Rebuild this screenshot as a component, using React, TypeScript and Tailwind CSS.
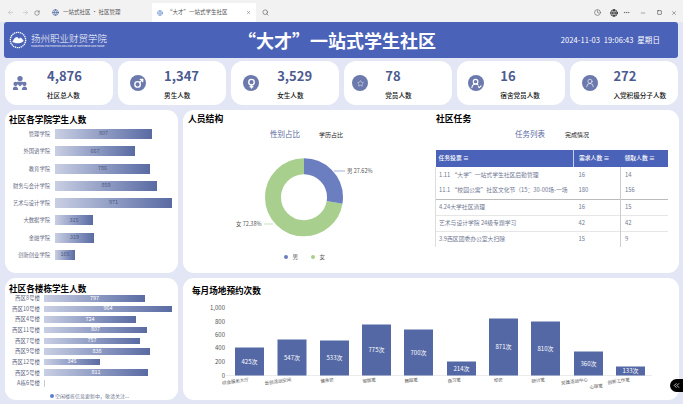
import { ArrowLeft, ArrowRight, ChevronsLeft, Clock, Ellipsis, Globe, Mars, Minus, RotateCw, Search, Square, UserRound, Venus, X, Star, UserRoundCheck } from 'lucide-react'

const stats = [
  { value: '4,876', label: '社区总人数', offset: 'pl-[7px] gap-[19px]' },
  { value: '1,347', label: '男生人数', offset: 'pl-[12px] gap-[18px]' },
  { value: '3,529', label: '女生人数', offset: 'pl-[12px] gap-[18px]' },
  { value: '78', label: '党员人数', offset: 'pl-[8px] gap-[17px]' },
  { value: '16', label: '宿舍党员人数', offset: 'pl-[11px] gap-[16px]' },
  { value: '272', label: '入党积极分子人数', offset: 'pl-[12px] gap-[15px]' },
]

const colleges = [
  { name: '管理学院', value: 807, width: 97 },
  { name: '外国语学院', value: 667, width: 80 },
  { name: '教育学院', value: 786, width: 95 },
  { name: '财务与会计学院', value: 859, width: 102 },
  { name: '艺术与设计学院', value: 971, width: 117 },
  { name: '大数据学院', value: 315, width: 38 },
  { name: '金融学院', value: 319, width: 39 },
  { name: '创新创业学院', value: 165, width: 20 },
]

const buildings = [
  { name: '西区8号楼', value: 797, width: 101 },
  { name: '西区10号楼', value: 964, width: 128 },
  { name: '西区4号楼', value: 724, width: 92 },
  { name: '西区11号楼', value: 807, width: 103 },
  { name: '西区7号楼', value: 757, width: 96 },
  { name: '西区9号楼', value: 838, width: 106 },
  { name: '西区12号楼', value: 345, width: 56 },
  { name: '西区5号楼', value: 811, width: 104 },
  { name: 'A栋6号楼', value: null, width: 0 },
]

const tasks = [
  ['1.11 “大学”一站式学生社区后勤管理', 16, 14],
  ['11.1 “校园公寓”社区文化节（15：30-00场-一场', 180, 156],
  ['4.24大学社区清理', 16, 15],
  ['艺术与设计学院 24级专题学习', 42, 42],
  ['3.9西区团委办公室大扫除', 15, 9],
]

const bookings = [
  { name: '综合服务大厅', value: 425, x: 52, height: 28 },
  { name: '云创活动空间', value: 547, x: 94.5, height: 36 },
  { name: '健身房', value: 533, x: 137, height: 35 },
  { name: '瑜伽室', value: 775, x: 179, height: 51 },
  { name: '舞蹈室', value: 700, x: 221, height: 46 },
  { name: '自习室', value: 214, x: 264, height: 14 },
  { name: '琴房', value: 871, x: 306, height: 57 },
  { name: '研讨室', value: 810, x: 348, height: 54 },
  { name: '党建活动中心', value: 360, x: 391, height: 24 },
  { name: '创新工作室', value: 133, x: 433, height: 9 },
]

function StatIcon({ index }: { index: number }) {
  if (index === 0) {
    return (
      <svg viewBox="0 0 18 18" className="h-[16px] w-[16px] shrink-0 fill-[#6b79ad]">
        <circle cx="9" cy="4" r="3" />
        <circle cx="4" cy="10" r="2.4" />
        <circle cx="14" cy="10" r="2.4" />
        <path d="M6 7.5h6l1 1.500-4 4-4-4zM1 17c0-3 1-4 3-4 1.500 0 2.500 1 3 4zM11 17c.5-3 1.500-4 3-4 2 0 3 1 3 4z" />
      </svg>
    )
  }
  const glyph = [
    null,
    <Mars key="m" size={11} strokeWidth={3} />,
    <Venus key="v" size={11} strokeWidth={3} />,
    <Star key="s" size={7} strokeWidth={1.500} />,
    <UserRoundCheck key="u" size={11} strokeWidth={2.500} />,
    <UserRound key="r" size={10} strokeWidth={1.500} />,
  ][index]
  return (
    <div className="flex h-[16px] w-[16px] shrink-0 items-center justify-center rounded-full bg-[#6b79ad] text-white">
      {glyph}
    </div>
  )
}

function HBar({ width, value, tall }: { width: number; value: number | null; tall: boolean }) {
  return (
    <div
      className={`${tall ? 'h-[10px] text-[#4f5a80]' : 'h-[6.500px] text-white'} flex items-center justify-center bg-linear-to-r from-[#c9cfe3] to-[#5a6ba3] text-[5.500px] leading-none`}
      style={{ width }}
    >
      {value}
    </div>
  )
}

export default function App() {
  return (
    <div className="flex h-[404px] w-[683px] flex-col overflow-hidden bg-[#e3e7f5] font-['Noto_Sans_CJK_SC','Noto_Sans',sans-serif]">
      {/* browser chrome */}
      <div className="flex h-[22px] shrink-0 items-end bg-[#f2f2f2] text-[#555]">
        <div className="flex h-[19px] w-[41px] shrink-0 items-center gap-[8px] pl-[7px]">
          <ArrowLeft size={7} className="shrink-0 text-[#bbb]" />
          <ArrowRight size={7} className="shrink-0 text-[#bbb]" />
          <RotateCw size={6} className="-ml-[3px] shrink-0" />
        </div>
        <div className="ml-[11px] flex h-[19px] w-[100px] shrink-0 items-center gap-[4px] text-[5.500px] whitespace-nowrap">
          <Globe size={7} className="shrink-0 text-[#3c5a9a]" />
          一站式社区 · 社区管理
        </div>
        <div className="flex h-[19px] w-[104px] shrink-0 items-center gap-[4px] bg-white pl-[5px] text-[5.500px] whitespace-nowrap">
          <Globe size={6} className="shrink-0 text-[#5a7fd0]" />
          “大才”一站式学生社区
          <X size={5} className="ml-auto mr-[5px] shrink-0" />
        </div>
        <div className="flex h-[19px] items-center pl-[6px]">
          <Search size={7} />
        </div>
        <div className="ml-auto flex h-[19px] items-center pr-[6px]">
          <Clock size={7} />
          <Globe size={8} className="ml-[9px] text-black" />
          <Ellipsis size={7} className="ml-[5px]" />
          <Minus size={6} className="ml-[10px]" />
          <Square size={5} className="ml-[11px] text-black" />
          <X size={6} className="ml-[9px]" />
        </div>
      </div>

      {/* title bar */}
      <div className="mx-[4px] mr-[5px] flex h-[36px] shrink-0 items-center rounded-[3px] bg-[#4a62b8] text-white">
        <div className="flex w-[234px] shrink-0 items-center gap-[3px] pl-[4px]">
          <svg viewBox="0 0 20 20" className="h-[18px] w-[20px] shrink-0 fill-none stroke-white">
            <circle cx="10" cy="10" r="8.500" strokeWidth="1.500" strokeDasharray="1.500 0.700" />
            <path d="M4 12c3-6 5-6 7-3 1-2 3-2 5 2-3 3-9 3-12 1z" fill="white" strokeWidth="0.500" />
          </svg>
          <div className="flex flex-col">
            <span className="text-[9.500px] leading-[13px] font-light">扬州职业财贸学院</span>
            <span className="text-[2.500px] leading-[3px] whitespace-nowrap">YANGZHOU POLYTECHNIC COLLEGE OF COMMERCE AND TRADE</span>
          </div>
        </div>
        <div className="flex-1 text-[18px] font-bold whitespace-nowrap">“大才”一站式学生社区</div>
        <div className="pr-[18px] text-[7.500px] tracking-[0.100px] whitespace-nowrap">2024-11-03&nbsp; 19:06:43&nbsp; 星期日</div>
      </div>

      {/* stat cards */}
      <div className="mt-[3px] grid h-[44px] shrink-0 grid-cols-6 gap-[5.500px] pr-[5px] pl-[5px]">
        {stats.map((stat, i) => (
          <div key={stat.label} className={`flex items-center rounded-[12px] bg-white ${stat.offset}`}>
            <StatIcon index={i} />
            <div className="flex flex-col">
              <span className="text-[13px] leading-[20px] font-semibold text-[#4b5b90]">{stat.value}</span>
              <span className="mt-[4px] text-[6.600px] leading-[10px] font-medium whitespace-nowrap text-[#111]">{stat.label}</span>
            </div>
          </div>
        ))}
      </div>

      {/* panels */}
      <div className="mt-[5px] grid h-[290px] grid-cols-[173px_496px] grid-rows-[163px_122px] gap-[5px] pl-[5px]">
        <section className="rounded-[11px] bg-white pt-[2px]">
          <h2 className="pl-[4px] text-[8.600px] leading-[14px] font-bold text-black">社区各学院学生人数</h2>
          <div className="mt-[3px] flex flex-col gap-[7.300px]">
            {colleges.map((c) => (
              <div key={c.name} className="flex items-center gap-[5px]">
                <span className="w-[45px] text-right text-[5.300px] leading-[10px] whitespace-nowrap text-[#5f6780]">{c.name}</span>
                <HBar width={c.width} value={c.value} tall />
              </div>
            ))}
          </div>
        </section>

        <section className="flex rounded-[11px] bg-white pt-[2px]">
          <div className="flex w-[248px] flex-col">
            <h2 className="pl-[5px] text-[8.800px] leading-[14px] font-bold text-black">人员结构</h2>
            <div className="mt-[2px] flex h-[12px] items-center">
              <span className="ml-[87px] text-[7.500px] text-[#5a6a9e]">性别占比</span>
              <span className="ml-[19px] text-[6px] text-[#222]">学历占比</span>
            </div>
            <svg viewBox="0 0 248 107" className="mt-[3px] h-[107px] w-[248px]">
              <g transform="rotate(-90 121 54.300)" fill="none" strokeWidth="16">
                <circle cx="121" cy="54.300" r="31" pathLength="100" stroke="#a8cf8e" strokeDasharray="72.380 27.620" strokeDashoffset="-27.620" />
                <circle cx="121" cy="54.300" r="31" pathLength="100" stroke="#6a7ec0" strokeDasharray="27.620 72.380" />
              </g>
              <path d="M151 28h11" stroke="#6a7ec0" strokeWidth="0.600" />
              <path d="M81 81h9" stroke="#a8cf8e" strokeWidth="0.600" />
              <text x="164" y="30" fontSize="5.500" fill="#555">男 27.62%</text>
              <text x="53" y="83" fontSize="5.500" fill="#555">女 72.38%</text>
            </svg>
            <div className="mt-[3px] flex items-center pl-[101px] text-[5.500px] leading-[8px] text-[#555]">
              <span className="h-[3.500px] w-[3.500px] rounded-full bg-[#6a7ec0]" />
              <span className="ml-[5px]">男</span>
              <span className="ml-[13px] h-[3.500px] w-[3.500px] rounded-full bg-[#a8cf8e]" />
              <span className="ml-[5px]">女</span>
            </div>
          </div>
          <div className="flex flex-1 flex-col">
            <h2 className="pl-[5px] text-[8.800px] leading-[14px] font-bold text-black">社区任务</h2>
            <div className="mt-[2px] flex h-[12px] items-center">
              <span className="ml-[84px] text-[7.500px] text-[#5a6a9e]">任务列表</span>
              <span className="ml-[20px] text-[6px] text-[#222]">完成情况</span>
            </div>
            <table className="mt-[10px] ml-[4px] w-[232px] table-fixed border-collapse text-[5.800px] text-[#6f7893]">
              <colgroup>
                <col className="w-[138px]" />
                <col className="w-[47px]" />
                <col className="w-[47px]" />
              </colgroup>
              <thead>
                <tr className="h-[17px] bg-[#4a62b8] text-left text-white">
                  <th className="border-r border-white/70 pl-[3px] font-medium">任务投票 ≡</th>
                  <th className="pl-[5px] font-medium">需求人数 ≡</th>
                  <th className="pl-[4px] font-medium">领取人数 ≡</th>
                </tr>
              </thead>
              <tbody>
                {tasks.map((t, i) => (
                  <tr key={i} className={`h-[16px] ${i === 0 || i === 4 ? '' : i === 1 ? 'border-b border-[#bbb]' : 'border-b border-[#e6e6e6]'}`}>
                    <td className="border-l border-[#ddd] pl-[3px] whitespace-nowrap">{t[0]}</td>
                    <td className="pl-[5px]">{t[1]}</td>
                    <td className="border-l border-[#ccc] pl-[4px]">{t[2]}</td>
                  </tr>
                ))}
              </tbody>
            </table>
          </div>
        </section>

        <section className="relative rounded-[11px] bg-white pt-[3px]">
          <h2 className="pl-[4px] text-[8.600px] leading-[14px] font-bold text-black">社区各楼栋学生人数</h2>
          <div className="flex flex-col gap-[4.150px]">
            {buildings.map((b) => (
              <div key={b.name} className="flex h-[6.500px] items-center gap-[4px]">
                <span className="w-[35px] text-right text-[5.500px] whitespace-nowrap text-[#5f6780]">{b.name}</span>
                {b.width > 0 ? <HBar width={b.width} value={b.value} tall={false} /> : <span className="h-[6.500px] w-px bg-[#ccc]" />}
              </div>
            ))}
          </div>
          <div className="mt-[6px] flex items-center justify-center gap-[1px] pr-[4px] text-[5px] leading-[6px] text-[#6f7893]">
            <span className="h-[4px] w-[4px] rounded-full bg-[#5a7fd0]" />
            空闲楼栋信息更新中，敬请关注...
          </div>
        </section>

        <section className="rounded-[11px] bg-white pt-[5px]">
          <h2 className="pl-[9px] text-[8.600px] leading-[14px] font-bold text-black">每月场地预约次数</h2>
          <svg viewBox="0 0 496 103" className="h-[103px] w-[496px]">
            <g fontSize="6" fill="#555" textAnchor="end">
              <text x="42" y="13">1,000</text>
              <text x="42" y="27">800</text>
              <text x="42" y="40">600</text>
              <text x="42" y="53">400</text>
              <text x="42" y="67">200</text>
              <text x="42" y="80.500">0</text>
            </g>
            <path d="M43 78.500h426" stroke="#ddd" strokeWidth="0.600" />
            {bookings.map((b) => (
              <g key={b.name}>
                <rect x={b.x} y={78.5 - b.height} width="29" height={b.height} fill="#5568a6" />
                <text x={b.x + 14.5} y={78.5 - b.height / 2 + 2} fontSize="6" fill="#fff" textAnchor="middle">{b.value}次</text>
                <text fontSize="4.500" fill="#555" textAnchor="end" transform={`translate(${b.x + 14} 84) rotate(-8)`}>{b.name}</text>
              </g>
            ))}
            <text fontSize="4.500" fill="#555" textAnchor="end" transform="translate(420 90) rotate(-8)">心理室</text>
          </svg>
        </section>
      </div>

      {/* sidebar toggle */}
      <div className="absolute top-[379px] left-[670px] flex h-[13px] w-[13px] items-center justify-center rounded-l-full bg-black text-white">
        <ChevronsLeft size={9} />
      </div>
    </div>
  )
}
